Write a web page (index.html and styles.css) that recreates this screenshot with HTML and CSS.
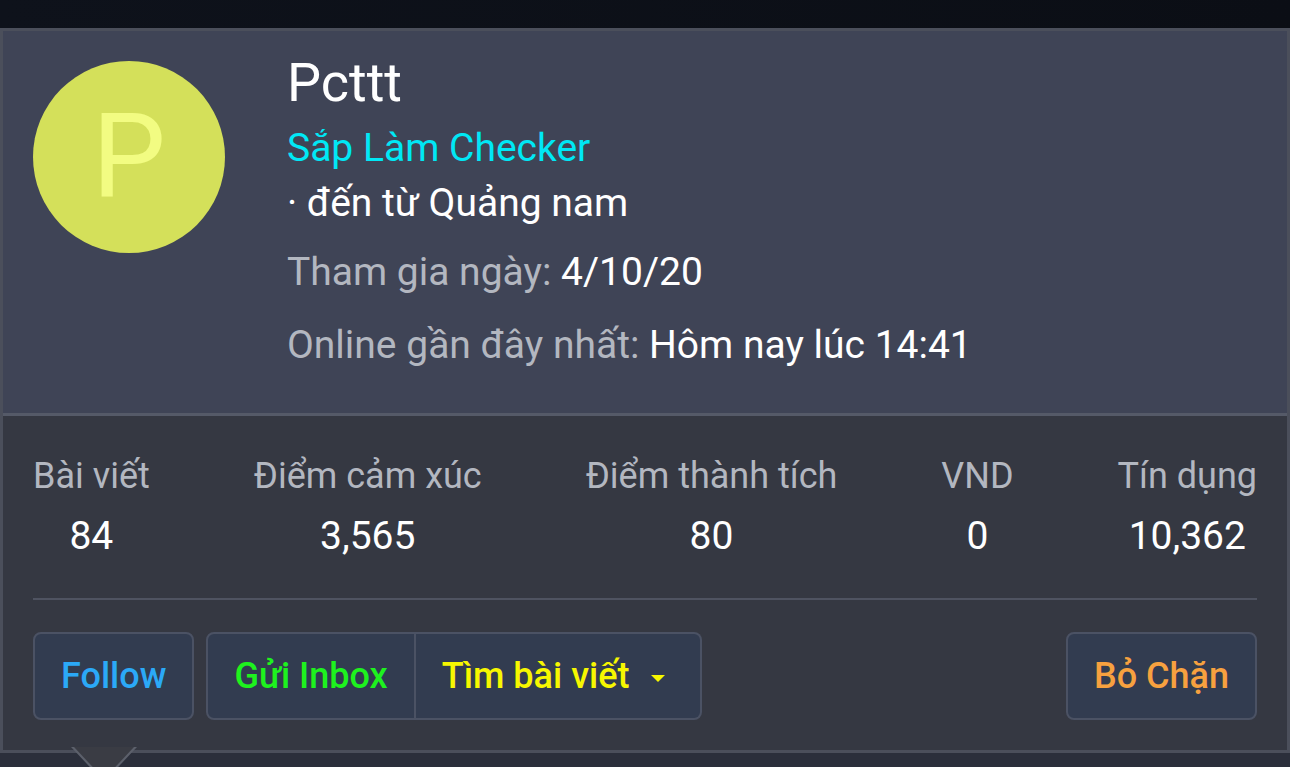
FILE: index.html
```html
<!DOCTYPE html>
<html lang="vi">
<head>
  <meta charset="UTF-8">
  <meta name="viewport" content="width=device-width, initial-scale=1.0">
  <title>Pcttt</title>
  <link rel="stylesheet" href="styles.css">
</head>
<body>

<div class="topbar"></div>

<div class="member-card">
  <div class="card-header">
    <div class="avatar">P</div>
    <div class="member-info">
      <div class="member-name">Pcttt</div>
      <div class="member-title">Sắp Làm Checker</div>
      <div class="member-location">· đến từ Quảng nam</div>
      <div class="meta"><span class="meta-label">Tham gia ngày:</span> 4/10/20</div>
      <div class="meta"><span class="meta-label">Online gần đây nhất:</span> Hôm nay lúc 14:41</div>
    </div>
  </div>

  <div class="card-body">
    <div class="stats">
      <div class="stat">
        <div class="stat-label">Bài viết</div>
        <div class="stat-value">84</div>
      </div>
      <div class="stat">
        <div class="stat-label">Điểm cảm xúc</div>
        <div class="stat-value">3,565</div>
      </div>
      <div class="stat">
        <div class="stat-label">Điểm thành tích</div>
        <div class="stat-value">80</div>
      </div>
      <div class="stat">
        <div class="stat-label">VND</div>
        <div class="stat-value">0</div>
      </div>
      <div class="stat">
        <div class="stat-label">Tín dụng</div>
        <div class="stat-value">10,362</div>
      </div>
    </div>

    <div class="actions">
      <button class="btn btn-follow">Follow</button>
      <div class="btn-group">
        <button class="btn btn-inbox">Gửi Inbox</button>
        <button class="btn btn-search">Tìm bài viết<span class="caret"></span></button>
      </div>
      <button class="btn btn-unblock">Bỏ Chặn</button>
    </div>
  </div>
</div>

</body>
</html>
```

FILE: styles.css
```css
body {
  margin: 0;
  min-height: 100vh;
  background-color: #2b2f3b;
  font-family: Roboto, "Noto Sans", sans-serif;
  color: #fff;
}
.topbar {
  height: 28px;
  background: linear-gradient(90deg, #0e121b, #0b0e15);
}
.member-card {
  position: relative;
  border: 3px solid #4b4f5b;
}
.member-card::before,
.member-card::after {
  content: "";
  position: absolute;
  top: 100%;
  clip-path: polygon(0 0, 100% 0, 50% 100%);
}
.member-card::before {
  left: 68px;
  width: 66px;
  height: 35px;
  margin-top: -3px;
  background-color: #5c606b;
}
.member-card::after {
  left: 71px;
  width: 60px;
  height: 32px;
  margin-top: -3px;
  background-color: #3a3c44;
}
.card-header {
  display: flex;
  gap: 62px;
  padding: 20px 30px 40px;
  background-color: #3f4456;
  border-bottom: 3px solid #555a68;
}
.avatar {
  width: 192px;
  height: 192px;
  margin-top: 10px;
  border-radius: 50%;
  background-color: #d4e05a;
  color: #f2fc82;
  font-size: 117px;
  line-height: 192px;
  text-align: center;
  flex-shrink: 0;
}
.member-name {
  font-size: 54px;
  line-height: 64px;
}
.member-title {
  margin-top: 6px;
  font-size: 39px;
  line-height: 55px;
  color: #00e8f5;
}
.member-location {
  font-size: 39px;
  line-height: 55px;
}
.meta {
  margin-top: 14px;
  font-size: 39px;
  line-height: 55px;
}
.meta + .meta {
  margin-top: 18px;
}
.meta-label {
  color: #b3b7c0;
}
.card-body {
  padding: 38px 30px 30px;
  background-color: #353842;
}
.stats {
  display: flex;
  justify-content: space-between;
  padding-bottom: 40px;
  border-bottom: 2px solid #4f5361;
}
.stat {
  text-align: center;
}
.stat-label {
  font-size: 36px;
  line-height: 44px;
  color: #b3b7c0;
}
.stat-value {
  margin-top: 16px;
  font-size: 39px;
  line-height: 44px;
}
.actions {
  display: flex;
  gap: 12px;
  margin-top: 32px;
}
.btn {
  height: 88px;
  padding: 0 26px;
  background-color: #323c50;
  border: 2px solid #4b5264;
  border-radius: 8px;
  font-family: inherit;
  font-size: 36px;
  font-weight: 500;
  cursor: pointer;
}
.btn-group {
  display: flex;
}
.btn-group .btn:first-child {
  border-radius: 8px 0 0 8px;
}
.btn-group .btn + .btn {
  border-left: none;
  border-radius: 0 8px 8px 0;
}
.btn-follow {
  color: #2ba9f7;
}
.btn-inbox {
  color: #1ef21e;
}
.btn-search {
  color: #f7f700;
  padding-right: 35px;
}
.caret {
  display: inline-block;
  margin-left: 22px;
  vertical-align: middle;
  border-left: 7px solid transparent;
  border-right: 7px solid transparent;
  border-top: 7px solid #f7f700;
}
.btn-unblock {
  margin-left: auto;
  color: #f7a13f;
}
```
